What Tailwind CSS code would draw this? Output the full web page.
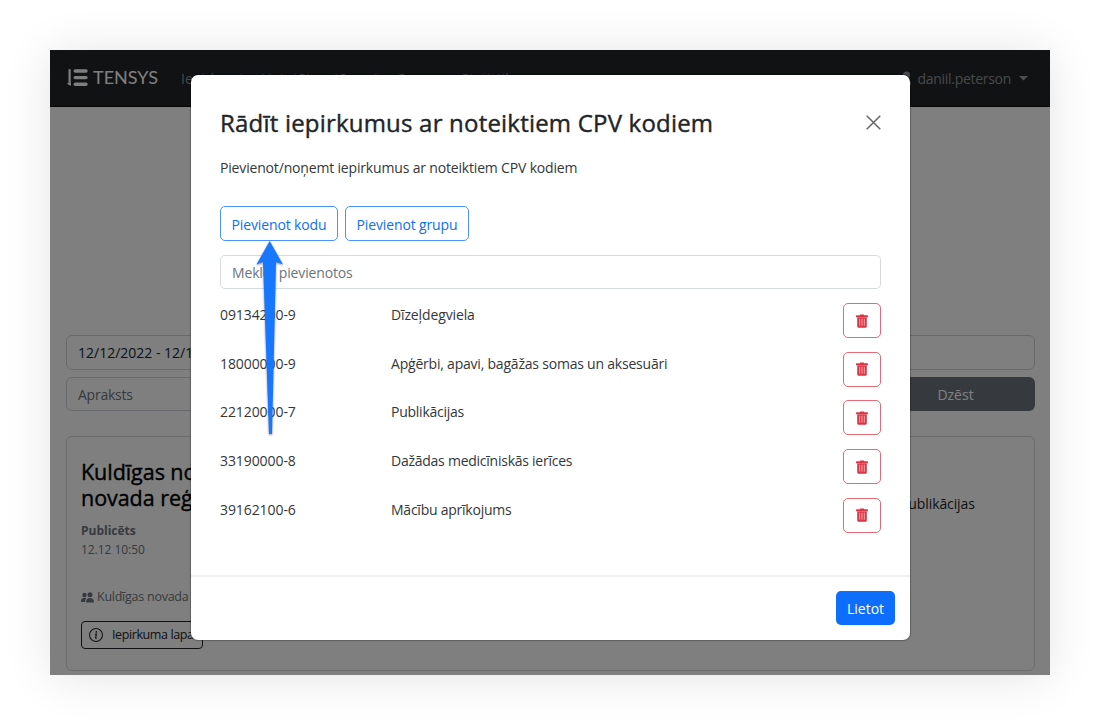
<!DOCTYPE html>
<html lang="lv">
<head>
<meta charset="utf-8">
<title>TENSYS</title>
<script src="https://cdn.jsdelivr.net/npm/@tailwindcss/browser@4"></script>
</head>
<body class="h-[725px] overflow-hidden bg-white p-[50px] font-['Open_Sans','Noto_Sans',sans-serif] text-[14px] text-[#212529]">
<svg class="hidden">
  <symbol id="trash" viewBox="0 0 12 14">
    <path d="M4 1.2V.4h4v.8h3.2c.5 0 .8.3.8.8v1.3H0V2c0-.5.3-.8.8-.8zM1.2 3.5h9.6v8.700c0 .9-.6 1.500-1.500 1.500H2.700c-.9 0-1.500-.6-1.500-1.500z" fill="#dc3545"/>
    <path d="M3.700 4.700v7M6 4.700v7M8.300 4.700v7" stroke="#f3b4ba" stroke-width=".9"/>
  </symbol>
</svg>
<div class="relative h-[625px] w-[1000px] overflow-visible bg-white shadow-[0_2px_45px_rgba(0,0,0,0.11)]">
  <div class="h-[625px] overflow-hidden">
    <nav class="flex h-[57px] items-center border-b border-[#0a0b0c] bg-[#212529] pl-4 pr-[22px] text-[#8f9294]">
      <svg width="95" height="20" viewBox="0 0 95 20" fill="none">
        <path d="M3.600 1.200v15.800" stroke="#fff" stroke-width="2.200"/><path d="M.8 15h3.900v3z" fill="#fff"/>
        <path d="M9.200 3h10.800M9.200 9.600h10.800M9.200 16.200h10.800" stroke="#fff" stroke-width="3.400" stroke-linecap="round"/>
        <text x="27" y="16.300" font-family="Lato" font-size="18" fill="#fff" textLength="65" lengthAdjust="spacingAndGlyphs">TENSYS</text>
      </svg>
      <div class="ml-[20px] flex gap-[18px] whitespace-nowrap">
        <span>Iepirkumi</span><span>Lietotājs</span><span>Līgumi</span><span>Grupas</span><span>Statistika</span>
      </div>
      <div class="ml-auto flex items-center">
        <svg class="mr-[7px]" width="9" height="15" viewBox="0 0 9 15" fill="#8f9294"><circle cx="4.500" cy="4" r="3.500"/><path d="M0 14c0-4 2-6 4.500-6S9 10 9 14z"/></svg>
        <span class="tracking-[-0.300px]">daniil.peterson</span>
        <svg class="ml-2" width="9" height="5" viewBox="0 0 9 5"><path d="M0 0h9L4.500 4.500z" fill="#9a9c9e"/></svg>
      </div>
    </nav>
    <main class="pl-4 pr-[15px] pt-[228px]">
      <div class="flex h-[35px] items-center whitespace-nowrap rounded-md border border-[#ced4da] px-[11px]">12/12/2022 - 12/12</div>
      <div class="mt-[7px] flex h-[34px]">
        <div class="flex flex-1 items-center rounded-md border border-[#ced4da] px-[11px] tracking-[-0.250px] text-[#6c757d]">Apraksts</div>
        <div class="ml-2 flex w-[159px] items-center justify-center rounded-md bg-[#6c757d] text-white">Dzēst</div>
      </div>
      <section class="mt-[25px] flex h-[235px] justify-between rounded-md border border-[#d8d8d8] px-[14px]">
        <div class="w-[300px] overflow-hidden whitespace-nowrap pt-[22px]">
          <h2 class="text-[21.500px] font-medium leading-[26px] tracking-[-0.050px] text-black [-webkit-text-stroke:0.400px_#000]">Kuldīgas no<br>novada reģ</h2>
          <div class="mt-[10px] text-[12px] font-bold leading-[19px] text-[#6c757d]">Publicēts</div>
          <div class="text-[12px] leading-[19px] tracking-[-0.050px] text-[#6c757d]">12.12 10:50</div>
          <div class="mt-[29px] flex items-center text-[12.500px] leading-[18px] tracking-[-0.250px] text-[#6c757d]">
            <svg class="mr-[3px]" width="13" height="11" viewBox="0 0 13 11" fill="#6c757d"><circle cx="3.500" cy="3" r="2.200"/><circle cx="9" cy="2.800" r="2.500"/><path d="M0 10c0-3 1.200-4.300 3.500-4.300.8 0 1.400.1 1.900.5C4.400 7.200 4 8.300 4 10zM5 10.500c0-3 1.300-4.500 4-4.500s4 1.500 4 4.500z"/></svg>
            Kuldīgas novada
          </div>
          <div class="mt-[15px] flex h-[28px] w-[122px] items-center rounded-[4px] border border-[#212529] pl-[7px] text-[12.500px] tracking-[-0.400px]">
            <svg class="mr-[9px]" width="14" height="14" viewBox="0 0 16 16" fill="none"><circle cx="8" cy="8" r="7.400" stroke="#212529" stroke-width="1.200"/><path d="M6.600 7.200L8.500 7 7.500 11.500q.2.500 1.200 0" stroke="#212529" stroke-width="1.300"/><circle cx="8.400" cy="4.500" r="1" fill="#212529"/></svg>
            Iepirkuma lapa
          </div>
        </div>
        <div class="w-[120px] pt-[56px] tracking-[-0.100px] text-[#212529]"><span>Publikācijas</span></div>
      </section>
    </main>
  </div>

  <div class="absolute inset-0 bg-black/50 pl-[141px] pt-[25px]">
    <div class="flex h-[565px] w-[719px] flex-col rounded-[7px] bg-white shadow-[0_0_1px_1px_rgba(0,0,0,0.25)]">
      <div class="flex-1 px-[29px]">
        <header class="flex h-[95px] items-center justify-between">
          <h1 class="whitespace-nowrap text-[24px] font-medium leading-8 tracking-[0.200px] [-webkit-text-stroke:0.400px_#212529]">Rādīt iepirkumus ar noteiktiem CPV kodiem</h1>
          <svg width="15" height="15" viewBox="0 0 15 15"><path d="M.7.700l13.600 13.600M14.300.700L.7 14.300" stroke="#666" stroke-width="1.500"/></svg>
        </header>
        <p class="-mt-[12px] leading-[20px] tracking-[-0.170px] text-[#33373b]">Pievienot/noņemt iepirkumus ar noteiktiem CPV kodiem</p>
        <div class="mt-[28px] flex gap-[7px] tracking-[-0.130px] text-[#0d6efd]">
          <button class="h-[35px] w-[118px] rounded-[5px] border border-[#4b93fd] pt-px">Pievienot kodu</button>
          <button class="h-[35px] w-[124px] rounded-[5px] border border-[#4b93fd] pt-px">Pievienot grupu</button>
        </div>
        <div class="mt-[14px] flex h-[34px] items-center rounded-[5px] border border-[#d5dade] px-[11px] tracking-[-0.150px] text-[#6c757d]">Meklēt pievienotos</div>
        <div class="mt-[14px] flex flex-col gap-[13.700px] text-[#33373b]">
          <div class="flex h-[35px] items-start leading-6"><span class="w-[171px] tracking-[-0.080px]">09134200-9</span><span class="flex-1 tracking-[-0.130px]">Dīzeļdegviela</span><button class="flex h-[35px] w-[38px] items-center justify-center rounded-[5px] border border-[#e46a76]"><svg width="12" height="14"><use href="#trash"/></svg></button></div>
          <div class="flex h-[35px] items-start leading-6"><span class="w-[171px] tracking-[-0.080px]">18000000-9</span><span class="flex-1 tracking-[-0.210px]">Apģērbi, apavi, bagāžas somas un aksesuāri</span><button class="flex h-[35px] w-[38px] items-center justify-center rounded-[5px] border border-[#e46a76]"><svg width="12" height="14"><use href="#trash"/></svg></button></div>
          <div class="flex h-[35px] items-start leading-6"><span class="w-[171px] tracking-[-0.080px]">22120000-7</span><span class="flex-1 tracking-[-0.250px]">Publikācijas</span><button class="flex h-[35px] w-[38px] items-center justify-center rounded-[5px] border border-[#e46a76]"><svg width="12" height="14"><use href="#trash"/></svg></button></div>
          <div class="flex h-[35px] items-start leading-6"><span class="w-[171px] tracking-[-0.080px]">33190000-8</span><span class="flex-1 tracking-[-0.250px]">Dažādas medicīniskās ierīces</span><button class="flex h-[35px] w-[38px] items-center justify-center rounded-[5px] border border-[#e46a76]"><svg width="12" height="14"><use href="#trash"/></svg></button></div>
          <div class="flex h-[35px] items-start leading-6"><span class="w-[171px] tracking-[-0.080px]">39162100-6</span><span class="flex-1 tracking-[-0.240px]">Mācību aprīkojums</span><button class="flex h-[35px] w-[38px] items-center justify-center rounded-[5px] border border-[#e46a76]"><svg width="12" height="14"><use href="#trash"/></svg></button></div>
        </div>
      </div>
      <footer class="flex h-[65px] items-start justify-end border-t-2 border-[#f0f0f0] pr-[15px] pt-[14px]">
        <button class="h-[34px] w-[59px] rounded-[5px] bg-[#0d6efd] pt-px text-white">Lietot</button>
      </footer>
    </div>
  </div>

  <svg class="absolute left-[204px] top-[189px] drop-shadow-[0_1px_1px_rgba(0,0,0,0.45)]" width="32" height="200" viewBox="0 0 32 200"><path d="M15.700 2L29 25.500l-7-2.500L18 195h-3L9 23l-6.500 2.500z" fill="#1877ff"/></svg>
</div>
</body>
</html>
